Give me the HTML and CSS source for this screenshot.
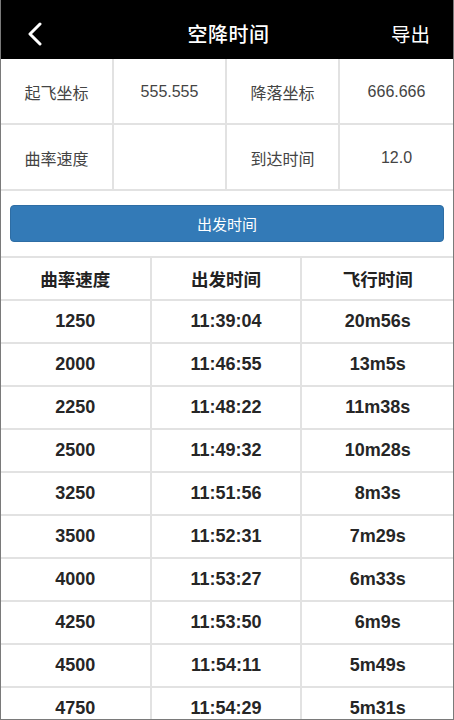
FILE: index.html
```html
<!DOCTYPE html>
<html lang="zh-CN">
<head>
<meta charset="utf-8">
<title>空降时间</title>
<link rel="stylesheet" href="styles.css">
</head>
<body>
<div class="frame">
  <header class="topbar">
    <span class="back">
      <svg width="20" height="24" viewBox="0 0 20 24"><polyline points="13,2 3,12 13,22" fill="none" stroke="#fff" stroke-width="3" stroke-linecap="round" stroke-linejoin="round"/></svg>
    </span>
    <h1 class="title">空降时间</h1>
    <span class="export">导出</span>
  </header>

  <div class="info">
    <div class="cell">起飞坐标</div>
    <div class="cell">555.555</div>
    <div class="cell">降落坐标</div>
    <div class="cell">666.666</div>
    <div class="cell">曲率速度</div>
    <div class="cell"></div>
    <div class="cell">到达时间</div>
    <div class="cell">12.0</div>
  </div>

  <div class="btn-wrap">
    <button class="btn">出发时间</button>
  </div>

  <div class="data">
    <div class="row head"><div>曲率速度</div><div>出发时间</div><div>飞行时间</div></div>
    <div class="row"><div>1250</div><div>11:39:04</div><div>20m56s</div></div>
    <div class="row"><div>2000</div><div>11:46:55</div><div>13m5s</div></div>
    <div class="row"><div>2250</div><div>11:48:22</div><div>11m38s</div></div>
    <div class="row"><div>2500</div><div>11:49:32</div><div>10m28s</div></div>
    <div class="row"><div>3250</div><div>11:51:56</div><div>8m3s</div></div>
    <div class="row"><div>3500</div><div>11:52:31</div><div>7m29s</div></div>
    <div class="row"><div>4000</div><div>11:53:27</div><div>6m33s</div></div>
    <div class="row"><div>4250</div><div>11:53:50</div><div>6m9s</div></div>
    <div class="row"><div>4500</div><div>11:54:11</div><div>5m49s</div></div>
    <div class="row"><div>4750</div><div>11:54:29</div><div>5m31s</div></div>
  </div>
</div>
</body>
</html>
```

FILE: styles.css
```css
* { box-sizing: border-box; }
html, body { margin: 0; padding: 0; background: #fff; }
body {
  font-family: "Liberation Sans", "Noto Sans CJK SC", sans-serif;
  color: #333;
}
.frame {
  width: 454px;
  height: 720px;
  overflow: hidden;
  border: 1px solid #7a7a7a;
  border-top: none;
  display: flex;
  flex-direction: column;
}
.topbar {
  height: 59px;
  flex: none;
  background: #000;
  color: #fff;
  display: grid;
  grid-template-columns: 1fr auto 1fr;
  align-items: center;
  padding: 7px 23px 0 26px;
}
.back { display: flex; align-items: center; padding-top: 1px; }
.title {
  margin: 0;
  font-size: 20px;
  font-weight: 500;
  letter-spacing: 0.5px;
}
.export {
  justify-self: end;
  font-size: 19.5px;
  font-weight: 400;
}
.info {
  display: grid;
  grid-template-columns: repeat(4, 1fr);
  grid-auto-rows: 66px;
  flex: none;
}
.info .cell {
  display: flex;
  align-items: center;
  justify-content: center;
  font-size: 16px;
  color: #444;
  padding-top: 1px;
  border-right: 2px solid #e2e2e2;
  border-bottom: 2px solid #e2e2e2;
}
.info .cell:nth-child(4n) { border-right: none; }
.btn-wrap {
  padding: 14px 9px 14px 9px;
  border-bottom: 2px solid #e2e2e2;
  flex: none;
}
.btn {
  display: block;
  width: 100%;
  height: 37px;
  background: #337ab7;
  border: 1px solid #2e6da4;
  border-radius: 4px;
  color: #fff;
  font-family: "Liberation Sans", "Noto Sans CJK SC", sans-serif;
  font-size: 15px;
  padding: 0;
}
.data { flex: none; }
.row {
  display: grid;
  grid-template-columns: repeat(3, 1fr);
  height: 43px;
  border-bottom: 2px solid #e2e2e2;
}
.row > div {
  display: flex;
  align-items: center;
  justify-content: center;
  font-size: 18px;
  font-weight: 700;
  color: #262626;
  border-right: 2px solid #e2e2e2;
}
.row > div:last-child { border-right: none; }
.row.head > div { font-size: 17.5px; color: #222; }
```
